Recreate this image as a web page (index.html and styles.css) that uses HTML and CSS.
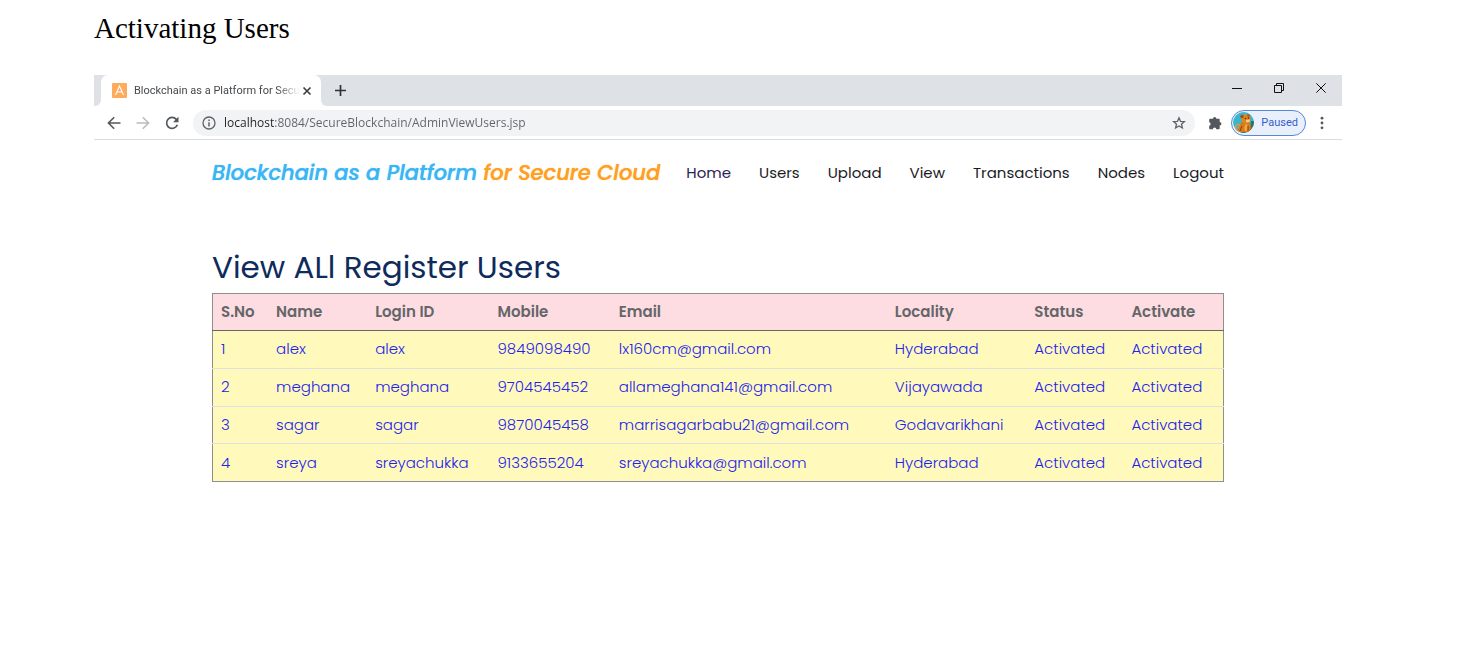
FILE: index.html
```html
<!DOCTYPE html>
<html lang="en">
<head>
<meta charset="utf-8">
<title>Activating Users</title>
<link rel="stylesheet" href="styles.css">
</head>
<body>
<main class="doc">
  <h1 class="doc-title">Activating Users</h1>
  <section class="browser" aria-label="Browser window">
    <div class="tabstrip">
      <div class="strip-edge"></div>
      <div class="tab">
        <svg class="favicon" viewBox="0 0 15 15" aria-hidden="true"><rect width="15" height="15" rx="1" fill="#ffab5e"/><path d="M3.5 12 7.5 3l4 9M5 9h5" fill="none" stroke="#fff" stroke-width="1.1"/></svg>
        <span class="tab-title">Blockchain as a Platform for Secu</span>
        <button class="icon-btn" type="button" aria-label="Close tab"><svg width="10" height="10" viewBox="0 0 10 10"><path d="m1.5 1.5 7 7m0-7-7 7" stroke="#3c4043" stroke-width="1.7"/></svg></button>
      </div>
      <div class="strip-rest">
        <button class="icon-btn" type="button" aria-label="New tab"><svg width="13" height="13" viewBox="0 0 13 13"><path d="M6.5 1v11M1 6.500h11" stroke="#303336" stroke-width="1.7"/></svg></button>
        <div class="window-buttons">
          <button class="icon-btn" type="button" aria-label="Minimize"><svg width="10" height="10" viewBox="0 0 10 10"><path d="M0 5.500h10" stroke="#111" stroke-width="1"/></svg></button>
          <button class="icon-btn" type="button" aria-label="Restore"><svg width="10" height="10" viewBox="0 0 10 10"><path d="M.5 2.500h7v7h-7zM2.500 2.500v-2h7v7h-2" fill="none" stroke="#111" stroke-width="1"/></svg></button>
          <button class="icon-btn" type="button" aria-label="Close"><svg width="10" height="10" viewBox="0 0 10 10"><path d="m.3.3 9.400 9.400m0-9.400L.3 9.700" stroke="#111" stroke-width="1"/></svg></button>
        </div>
      </div>
    </div>
    <div class="toolbar">
      <div class="history">
        <button class="icon-btn" type="button" aria-label="Back"><svg width="14" height="14" viewBox="0 0 14 14"><path d="M13.500 7H1.500M7.200 1.200 1.400 7l5.800 5.800" fill="none" stroke="#54585c" stroke-width="1.600"/></svg></button>
        <button class="icon-btn" type="button" aria-label="Forward"><svg width="14" height="14" viewBox="0 0 14 14"><path d="M.5 7h12M6.800 1.200 12.600 7l-5.800 5.800" fill="none" stroke="#babcbe" stroke-width="1.600"/></svg></button>
        <button class="icon-btn" type="button" aria-label="Reload"><svg width="14" height="14" viewBox="0 0 14 14"><path d="M12.300 8.700a5.500 5.500 0 1 1-1-5.300l1.200 1.200" fill="none" stroke="#54585c" stroke-width="1.700"/><path d="M13.500.7v5.500H8z" fill="#54585c"/></svg></button>
      </div>
      <div class="omnibox">
        <svg width="14" height="14" viewBox="0 0 14 14" aria-hidden="true"><circle cx="7" cy="7" r="6" fill="none" stroke="#5f6368" stroke-width="1.300"/><path d="M7 6.200v4.300M7 3.400v1.500" stroke="#5f6368" stroke-width="1.500"/></svg>
        <input class="url" type="text" aria-label="Address" value="localhost:8084/SecureBlockchain/AdminViewUsers.jsp">
        <button class="icon-btn" type="button" aria-label="Bookmark"><svg width="14" height="14" viewBox="0 0 14 14"><path d="m7 1.800 1.500 3.500 3.900.3-2.900 2.600.9 3.800L7 10l-3.400 2 .9-3.800-2.900-2.600 3.900-.3z" fill="none" stroke="#5f6368" stroke-width="1.300"/></svg></button>
      </div>
      <button class="icon-btn extensions" type="button" aria-label="Extensions"><svg width="14" height="14" viewBox="0 0 14 14"><path d="M5 2.700a1.700 1.700 0 0 1 3.400 0h2.300c.6 0 1 .4 1 1v2.400a1.700 1.700 0 0 1 0 3.500v2.600c0 .6-.4 1-1 1H8.300a1.700 1.700 0 0 0-3.400 0H2.200c-.6 0-1-.4-1-1V9.700a1.800 1.800 0 0 0 0-3.500V3.700c0-.6.4-1 1-1z" fill="#54585c"/></svg></button>
      <button class="profile" type="button">
        <svg width="21" height="21" viewBox="0 0 21 21" aria-hidden="true"><clipPath id="avatar"><circle cx="10.500" cy="10.500" r="10.400"/></clipPath><g clip-path="url(#avatar)"><path fill="#39b6cc" d="M0 0h21v21H0z"/><path fill="#3b6e52" d="M0 17h21v4H0zM18 9h3v9h-4z"/><path d="M7 18c-4 1-6-3-3-5s4 2 1 3" fill="none" stroke="#e79a34" stroke-width="1.500"/><path fill="#d97a19" d="M10 9c-3 3-5 6-4 11h10c3-3 2-8-1-11z"/><path fill="#f0a83c" d="M13 12c-2 2-2 5-1 7h2c1-2 1-5 0-7z"/><path fill="#e0851f" d="M9 3c2-1 7-1 8 2l1 3-3 3c-3 1-5 0-6-2-1-1-1-4 0-6z"/><circle cx="9" cy="4.500" r="1.800" fill="#a84f16"/><circle cx="15.500" cy="3.500" r="1.400" fill="#b85a17"/><path fill="#f8d184" d="m13 8 4-.5-.5 2.500-3 .5z"/><circle cx="12.500" cy="6.500" r=".8" fill="#4c291b"/><circle cx="15.500" cy="6" r=".8" fill="#4c291b"/><path d="m9 14-2 5m8-5v5" stroke="#8e3d14"/></g></svg>
        <span>Paused</span>
      </button>
      <button class="icon-btn menu" type="button" aria-label="Menu"><svg width="4" height="14" viewBox="0 0 4 14"><g fill="#54585c"><circle cx="2" cy="2.200" r="1.400"/><circle cx="2" cy="7" r="1.400"/><circle cx="2" cy="11.800" r="1.400"/></g></svg></button>
    </div>
    <div class="page">
      <header class="site-header">
        <div class="brand"><span class="brand-blue">Blockchain as a Platform</span> <span class="brand-orange">for Secure Cloud</span></div>
        <nav class="site-nav">
          <a class="current" href="#">Home</a><a href="#">Users</a><a href="#">Upload</a><a href="#">View</a><a href="#">Transactions</a><a href="#">Nodes</a><a href="#">Logout</a>
        </nav>
      </header>
      <h2 class="page-title">View ALl Register Users</h2>
      <table class="users">
        <colgroup><col class="c-no"><col class="c-name"><col class="c-login"><col class="c-mobile"><col class="c-email"><col class="c-locality"><col class="c-status"><col class="c-activate"></colgroup>
        <thead><tr><th>S.No</th><th>Name</th><th>Login ID</th><th>Mobile</th><th>Email</th><th>Locality</th><th>Status</th><th>Activate</th></tr></thead>
        <tbody>
          <tr><td>1</td><td>alex</td><td>alex</td><td>9849098490</td><td>lx160cm@gmail.com</td><td>Hyderabad</td><td>Activated</td><td>Activated</td></tr>
          <tr><td>2</td><td>meghana</td><td>meghana</td><td>9704545452</td><td>allameghana141@gmail.com</td><td>Vijayawada</td><td>Activated</td><td>Activated</td></tr>
          <tr><td>3</td><td>sagar</td><td>sagar</td><td>9870045458</td><td>marrisagarbabu21@gmail.com</td><td>Godavarikhani</td><td>Activated</td><td>Activated</td></tr>
          <tr><td>4</td><td>sreya</td><td>sreyachukka</td><td>9133655204</td><td>sreyachukka@gmail.com</td><td>Hyderabad</td><td>Activated</td><td>Activated</td></tr>
        </tbody>
      </table>
    </div>
  </section>
</main>
</body>
</html>
```
FILE: styles.css
```css
* { box-sizing: border-box; }
body { margin: 0; background: #fff; }
svg { display: block; flex: none; }
.doc { padding: 10px 131px 0 94px; }
.doc-title { margin: 0 0 29px; font: 400 29px/36px "Liberation Serif", serif; color: #000; }
.browser { font-family: "Open Sans", sans-serif; }

.icon-btn { display: flex; padding: 0; border: 0; background: none; }
.tabstrip { display: flex; height: 31px; background: linear-gradient(to right, #dee1e6 20px, #fff 20px 200px, #dee1e6 200px) top / 100% 10px no-repeat; }
.strip-edge { width: 7px; background: #dee1e6; border-bottom-right-radius: 6px; }
.tab { display: flex; align-items: center; width: 220px; padding: 0 10px 0 11px; background: #fff; border-radius: 7px 7px 0 0; }
.favicon { width: 15px; height: 15px; margin-right: 7px; }
.tab-title { flex: 1; margin-right: 2px; white-space: nowrap; font: 11px/16px Roboto, sans-serif; color: #45494d; mask-image: linear-gradient(to right, #000 86%, transparent); }
.strip-rest { flex: 1; display: flex; align-items: center; justify-content: space-between; padding: 0 16px 0 13px; background: #dee1e6; border-bottom-left-radius: 6px; }
.window-buttons { display: flex; gap: 32px; padding-bottom: 5px; }

.toolbar { display: flex; align-items: center; height: 34px; padding: 0 18px 0 13px; border-bottom: 1px solid #dadce0; }
.history { display: flex; gap: 15px; margin-right: 14px; }
.omnibox { flex: 1; display: flex; align-items: center; height: 26px; padding: 0 9px; border-radius: 13px; background: #f1f3f4; }
.url { flex: 1; min-width: 0; margin-left: 8px; padding: 0; border: 0; outline: 0; font: 12px/18px "Open Sans", sans-serif; color: #5f6368; background: linear-gradient(to right, #202124 51px, #5f6368 51px); -webkit-background-clip: text; background-clip: text; -webkit-text-fill-color: transparent; }
.extensions { margin: 0 9px 0 13px; }
.profile { display: flex; align-items: center; gap: 7px; height: 26px; padding: 0 7px 0 1px; border: 1px solid #5489d8; border-radius: 13px; background: #e9f0fc; font: 11px/16px Roboto, sans-serif; color: #315fcc; }
.menu { margin-left: 14px; }

.page { padding: 15px 118px 0; font-family: Poppins, Inter, sans-serif; }
.site-header { display: flex; align-items: center; justify-content: space-between; height: 34px; }
.brand { font-size: 21px; font-style: italic; font-weight: 500; white-space: nowrap; text-shadow: 0 0 1px currentColor; }
.brand-blue { color: #3db5f5; }
.brand-orange { color: #ff9f24; }
.site-nav { display: flex; gap: 28px; }
.site-nav a { font-size: 15px; color: #1b1b1f; text-decoration: none; }
.site-nav .current { color: #2d2250; }
.page-title { margin: 59px 0 6px; font-size: 31px; line-height: 39px; font-weight: 400; color: #0f2b5b; }

.users { width: 100%; height: 189px; table-layout: fixed; border-collapse: collapse; border: 1px solid #8e8e8e; font-size: 15px; line-height: 20px; }
.users th, .users td { padding: 8px; text-align: left; white-space: nowrap; }
.users th { font-weight: 600; color: #65666a; background: #fddde1; border-bottom: 1px solid #666; }
.users td { font-weight: 300; color: #2222ee; background: #fffabc; border-top: 1px solid #dfe0e3; }
.users tbody tr:first-child td { border-top-color: #666; }
.c-no { width: 5.5%; }
.c-name { width: 9.8%; }
.c-login { width: 12.1%; }
.c-mobile { width: 12%; }
.c-email { width: 27.3%; }
.c-locality { width: 13.8%; }
.c-status { width: 9.6%; }
.c-activate { width: 9.9%; }
```
